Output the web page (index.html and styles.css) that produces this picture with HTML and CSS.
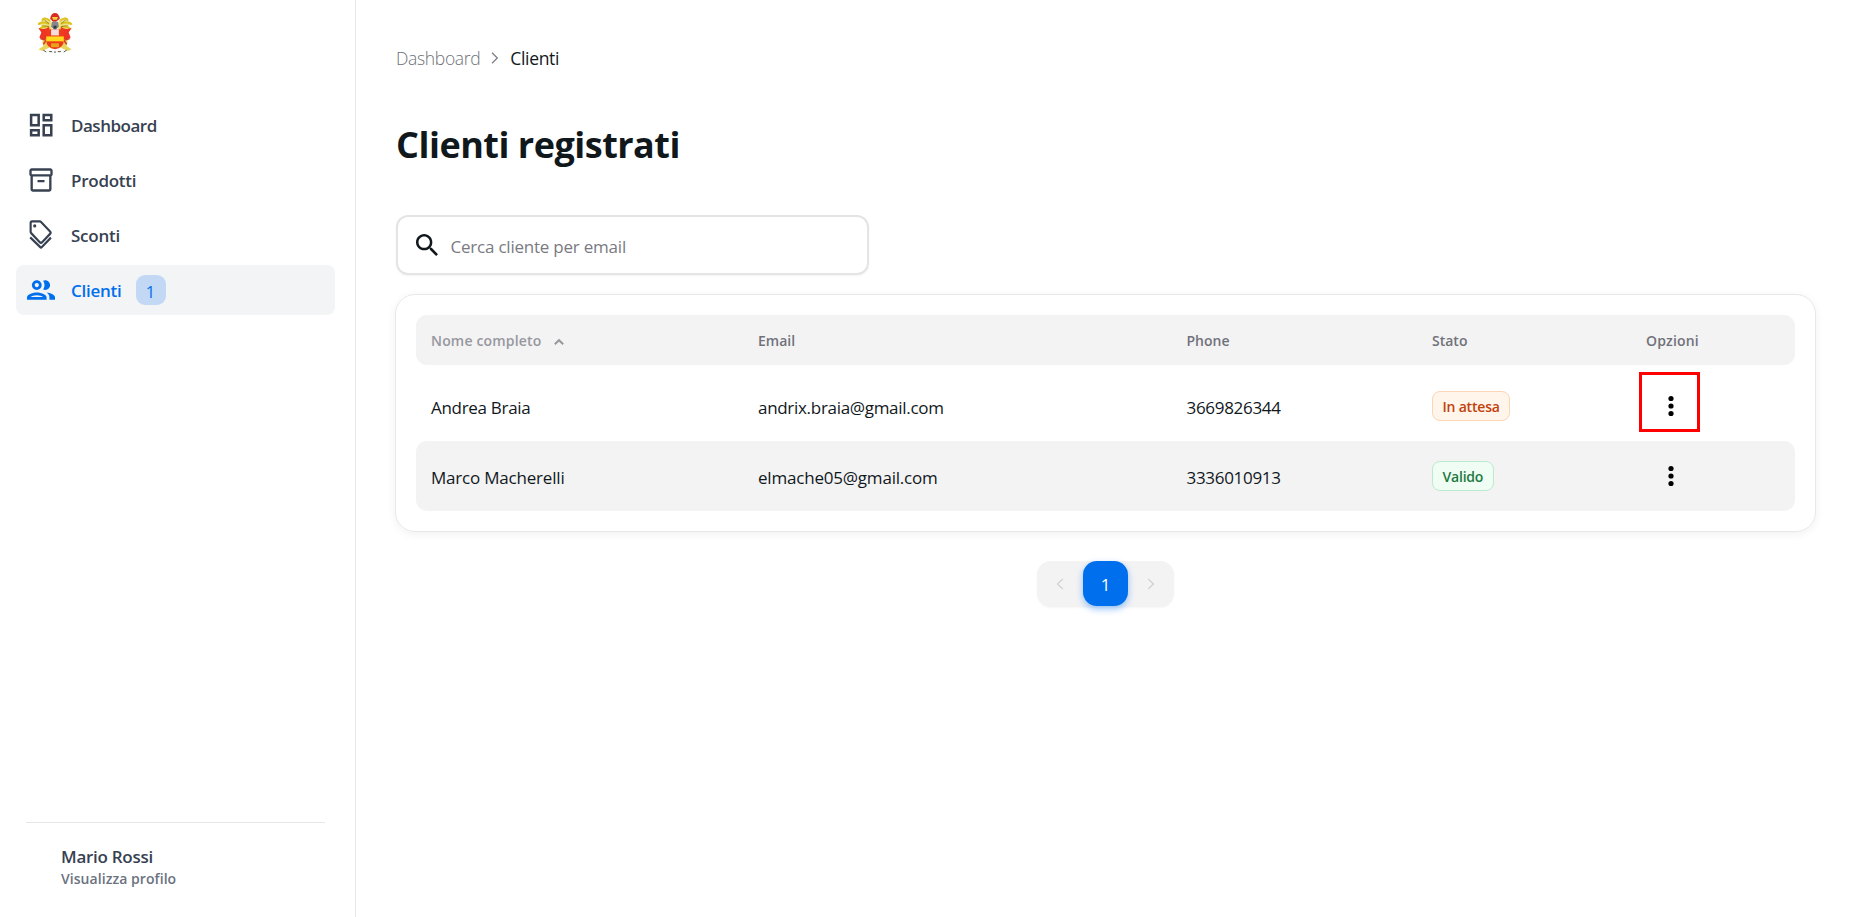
FILE: index.html
```html
<!DOCTYPE html>
<html lang="it">
<head>
<meta charset="utf-8">
<title>Clienti registrati</title>
<link rel="stylesheet" href="styles.css">
</head>
<body>
<div class="app">
  <aside class="sidebar">
    <svg class="logo" viewBox="0 0 36 44">
      <path d="M12 7Q5 3 4 10Q-1 10 4 14Q1 18 7 19L14 20L16 12ZM24 7Q31 3 32 10Q37 10 32 14Q35 18 29 19L22 20L20 12Z" fill="#f0e08a"/>
      <path d="M13 9Q6 4 5 9M12 12Q3 9 1 13M12 15Q5 14 2 18M14 18Q8 17 5 20M23 9Q30 4 31 9M24 12Q33 9 35 13M24 15Q31 14 34 18M22 18Q28 17 31 20" stroke="#dcc21c" stroke-width="2"/>
      <path d="M7 8l5 4M5 14l7 1M29 8l-5 4M31 14l-7 1" stroke="#8e8420" stroke-width=".8"/>
      <path d="M13 7Q14 1 18 1Q22 1 23 7L19 10H16Z" fill="#d92a24"/>
      <path d="M15 5h6l-1 3h-4z" fill="#e9d338"/>
      <path d="M1 16q6 3 11-1l1 14H7l-5-3 2-5zM35 16q-6 3-11-1l-1 14h6l5-3-2-5z" fill="#ee3524"/>
      <path d="M5 29l6-2 2 9-8 4-4-2 5-3zM31 29l-6-2-2 9 8 4 4-2-5-3z" fill="#e8d65a"/>
      <path d="M3 27l6 2-3 4M33 27l-6 2 3 4" stroke="#d63b27" stroke-width="1.600"/>
      <path d="M9 18H27V29Q27 37 18 38Q9 37 9 29Z" fill="#ef3b1d"/>
      <path d="M9 25h18v5H9z" fill="#ffd91c"/>
      <path d="M14 18h8v6h-8z" fill="#f4dcda"/>
      <path d="M14 32h8v4h-8z" fill="#e7a51b"/>
      <path d="M15 10h6l1 5-3 3h-2l-3-3z" fill="#85878a"/>
      <path d="M16.500 14h3v3h-3z" fill="#35383c"/>
      <path d="M8 38q10 3 20 0v3q-10 3-20 0z" fill="#f8f8f4"/>
      <path d="M12 40.500h3m2 .5h2m2-.5h3M6 39l3 2m21-2-3 2" stroke="#56534a" stroke-width="1"/>
    </svg>
    <nav class="nav">
      <a class="nav-item"><svg class="nav-icon" viewBox="0 0 24 24"><path d="M19 5v2h-4V5h4M9 5v6H5V5h4m10 8v6h-4v-6h4M9 17v2H5v-2h4M21 3h-8v6h8V3zM11 3H3v10h8V3zm10 8h-8v10h8V11zm-10 4H3v6h8v-6z" transform="translate(-.8 -.8) scale(1.080)"/></svg><span class="nav-label tight">Dashboard</span></a>
      <a class="nav-item"><svg class="nav-icon" viewBox="0 0 24 24"><path d="M20 2H4c-1 0-2 .9-2 2v3.010c0 .72.430 1.340 1 1.690V20c0 1.100 1.100 2 2 2h14c.9 0 2-.9 2-2V8.700c.570-.350 1-.970 1-1.690V4c0-1.100-1-2-2-2zm-1 18H5V9h14v11zm1-13H4V4h16v3zM9 12h6v2H9z"/></svg><span class="nav-label">Prodotti</span></a>
      <a class="nav-item"><svg class="nav-icon" viewBox="0 0 24 24"><g transform="translate(-.1 -.8) scale(.92 .98)"><path d="M4.800 1.200h7.300c.4 0 .8.200 1.100.5l8.400 8.300c.6.600.6 1.500 0 2.100l-7.400 7.300c-.6.600-1.600.6-2.200 0l-8-8a1.500 1.500 0 0 1-.5-1.100V2.600c0-.8.600-1.400 1.300-1.400z" fill="none" stroke="currentColor" stroke-width="2"/><circle cx="7.300" cy="5.100" r="1.500"/><path d="M3.100 15.100l9.100 8.400q.9.900 1.800 0l8.400-8.200" fill="none" stroke="currentColor" stroke-width="2"/></g></svg><span class="nav-label">Sconti</span></a>
      <a class="nav-item active"><svg class="nav-icon" viewBox="0 0 24 24"><path d="M9 13.750c-2.340 0-7 1.170-7 3.500V19h14v-1.750c0-2.330-4.660-3.500-7-3.500zM4.340 17c.840-.580 2.870-1.250 4.660-1.250s3.820.670 4.660 1.250H4.340zM9 12c1.930 0 3.500-1.570 3.500-3.500S10.930 5 9 5 5.500 6.570 5.500 8.500 7.070 12 9 12zm0-5c.830 0 1.500.670 1.500 1.500S9.830 10 9 10s-1.500-.670-1.500-1.500S8.170 7 9 7zm7.040 6.810c1.160.840 1.960 1.960 1.960 3.440V19h4v-1.750c0-2.020-3.500-3.170-5.960-3.440zM15 12c1.930 0 3.500-1.570 3.500-3.500S16.930 5 15 5c-.540 0-1.040.130-1.500.350.630.890 1 1.980 1 3.150s-.370 2.260-1 3.150c.460.220.960.350 1.500.350z" transform="translate(-2.400 -2.400) scale(1.200)"/></svg><span class="nav-label">Clienti</span><span class="count">1</span></a>
    </nav>
    <div class="profile">
      <div class="profile-name">Mario Rossi</div>
      <div class="profile-link">Visualizza profilo</div>
    </div>
  </aside>
  <main class="main">
    <div class="breadcrumb">
      <span class="crumb">Dashboard</span>
      <svg class="crumb-sep" viewBox="0 0 8 12"><path d="M1 .8l5.300 5.200L1 11.200"/></svg>
      <span class="crumb-current">Clienti</span>
    </div>
    <h1 class="title">Clienti registrati</h1>
    <div class="search">
      <svg class="search-icon" viewBox="3 3 17.490 17.490"><path d="M15.500 14h-.790l-.280-.270C15.410 12.590 16 11.110 16 9.500 16 5.910 13.090 3 9.500 3S3 5.910 3 9.500 5.910 16 9.500 16c1.610 0 3.090-.590 4.230-1.570l.270.280v.790l5 4.990L20.490 19l-4.990-5zm-6 0C7.010 14 5 11.990 5 9.500S7.010 5 9.500 5 14 7.010 14 9.500 11.990 14 9.500 14z"/></svg>
      <span class="placeholder">Cerca cliente per email</span>
    </div>
    <section class="card">
      <div class="row head">
        <span class="sorted"><span class="sorted-label">Nome completo</span><svg class="sort" viewBox="0 0 12 8"><path d="M1.800 6.200L6 2.200l4.200 4"/></svg></span>
        <span>Email</span><span>Phone</span><span>Stato</span><span class="sorted-label">Opzioni</span>
      </div>
      <div class="row">
        <span class="cell">Andrea Braia</span><span class="cell">andrix.braia@gmail.com</span><span class="cell">3669826344</span>
        <span><span class="chip pending">In attesa</span></span>
        <span class="options"><span class="highlight"></span><svg class="dots" viewBox="0 0 6 22"><circle cx="3" cy="3.500" r="2.600"/><circle cx="3" cy="11" r="2.600"/><circle cx="3" cy="18.500" r="2.600"/></svg></span>
      </div>
      <div class="row striped">
        <span class="cell wide">Marco Macherelli</span><span class="cell wide">elmache05@gmail.com</span><span class="cell">3336010913</span>
        <span><span class="chip valid">Valido</span></span>
        <span class="options"><svg class="dots" viewBox="0 0 6 22"><circle cx="3" cy="3.500" r="2.600"/><circle cx="3" cy="11" r="2.600"/><circle cx="3" cy="18.500" r="2.600"/></svg></span>
      </div>
    </section>
    <div class="pagination">
      <span class="page-arrow"><svg viewBox="0 0 8 12"><path d="M6.800 1L1.500 6l5.300 5"/></svg></span>
      <span class="page">1</span>
      <span class="page-arrow"><svg viewBox="0 0 8 12"><path d="M1.200 1l5.300 5-5.300 5"/></svg></span>
    </div>
  </main>
</div>
</body>
</html>
```
FILE: styles.css
```css
* { box-sizing: border-box; }
body { margin: 0; font-family: "Open Sans", "Noto Sans", sans-serif; color: #11181c; background: #fff; overflow: hidden; }
svg { display: block; flex: none; }
.app { display: flex; height: 917px; }
.sidebar { width: 356px; flex: none; border-right: 1px solid #e5e7eb; display: flex; flex-direction: column; padding: 12px 20px 0 16px; }
.logo { width: 36px; height: 43px; margin-left: 21px; fill: none; }
.nav { display: flex; flex-direction: column; gap: 5px; margin-top: 45px; }
.nav-item { height: 50px; display: flex; align-items: center; padding-left: 11px; border-radius: 8px; color: #374151; }
.nav-icon { width: 28px; height: 28px; fill: currentColor; overflow: visible; }
.nav-label { margin-left: 16px; font-size: 17px; font-weight: 600; line-height: 24px; letter-spacing: -0.250px; padding-top: 1px; }
.tight { letter-spacing: -0.480px; }
.active { background: #f3f4f6; color: #006fee; }
.count { width: 30px; height: 30px; margin-left: 14px; border-radius: 9px; background: #c2d8f5; display: flex; align-items: center; justify-content: center; font-size: 16.500px; padding-top: 2px; }
.profile { margin: auto 10px 0; border-top: 1px solid #e5e7eb; padding: 22px 0 0 35px; height: 95px; color: #374151; }
.profile-name { font-size: 17px; font-weight: 600; line-height: 24px; letter-spacing: -0.270px; }
.profile-link { font-size: 14px; font-weight: 600; line-height: 20px; color: #6b7280; letter-spacing: .060px; }
.main { flex: 1; padding: 45px 36px 0 40px; }
.breadcrumb { display: flex; align-items: center; height: 26px; font-size: 17.500px; font-weight: 300; letter-spacing: -0.330px; }
.crumb { color: #6d7176; }
.crumb-sep { width: 8px; height: 12px; margin: 0 11px 0 11px; fill: none; stroke: #7d8186; stroke-width: 1.300; }
.crumb-current { font-weight: 400; }
.title { margin: 49px 0 0; font-size: 36px; line-height: 50px; font-weight: 700; letter-spacing: -0.500px; }
.search { width: 473px; height: 60px; margin-top: 45px; border: 2px solid #e4e4e7; border-radius: 12px; display: flex; align-items: center; padding-left: 18px; box-shadow: 0 1px 2px rgba(0,0,0,.05); }
.search-icon { width: 22px; height: 22px; fill: #11181c; margin-top: -1px; }
.placeholder { margin-left: 12.500px; font-size: 17px; font-weight: 400; color: #7a7a83; letter-spacing: -0.220px; padding-top: 2px; }
.card { height: 238px; margin-top: 19px; margin-left: -1px; padding: 20px; border: 1px solid #e8e8ea; border-radius: 20px; box-shadow: 0 2px 10px rgba(0,0,0,.06); }
.row { display: grid; grid-template-columns: 327px 428.500px 245.500px 214px 1fr; align-items: center; height: 70px; padding-left: 15px; border-radius: 11px; }
.head { height: 50px; margin-bottom: 6px; background: #f3f3f4; color: #71717a; font-size: 14px; font-weight: 600; }
.sorted { display: flex; align-items: center; opacity: .7; }
.sorted-label { letter-spacing: .180px; }
.sort { width: 12px; height: 8px; margin: 3px 0 0 11px; fill: none; stroke: #71717a; stroke-width: 2; }
.striped { background: #f3f3f4; }
.cell { font-size: 17px; letter-spacing: -0.300px; padding-top: 2px; }
.wide { letter-spacing: -0.200px; }
.chip { display: inline-flex; align-items: center; height: 30px; padding: 0 9.500px; border: 1px solid; border-radius: 8px; font-size: 14px; font-weight: 600; letter-spacing: -0.200px; vertical-align: middle; }
.pending { background: #fff5eb; border-color: #fbd5b5; color: #c2410c; }
.valid { background: #f0fdf4; border-color: #bbead0; color: #1b7a40; }
.options { position: relative; padding-left: 22px; }
.dots { width: 6px; height: 22px; fill: #000; }
.highlight { position: absolute; left: -7px; top: -23px; width: 61px; height: 60px; border: 3px solid #f00; }
.pagination { display: flex; width: 137px; height: 46px; margin: 29px auto 0 641px; background: #f3f3f4; border-radius: 14px; box-shadow: 0 1px 2px rgba(0,0,0,.04); }
.page-arrow { width: 46px; display: flex; align-items: center; justify-content: center; }
.page-arrow svg { width: 8px; height: 12px; fill: none; stroke: #cfd1d4; stroke-width: 1.200; }
.page { width: 45px; height: 45px; border-radius: 14px; background: #006fee; color: #fff; display: flex; align-items: center; justify-content: center; font-size: 17px; padding-top: 2px; box-shadow: 0 3px 7px rgba(0,111,238,.4); }
```
